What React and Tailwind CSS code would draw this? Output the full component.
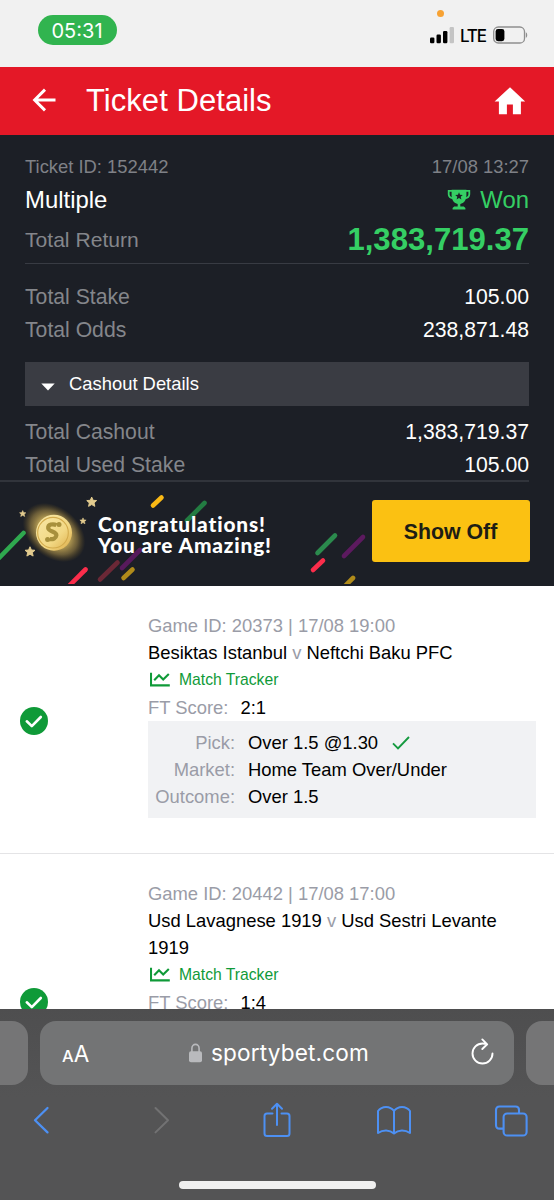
import clsx from "clsx";

const games = [
  {
    id: "20373",
    time: "17/08 19:00",
    home: "Besiktas Istanbul",
    away: "Neftchi Baku PFC",
    score: "2:1",
    pick: {
      label: "Over 1.5 @1.30",
      market: "Home Team Over/Under",
      outcome: "Over 1.5",
    },
  },
  {
    id: "20442",
    time: "17/08 17:00",
    home: "Usd Lavagnese 1919",
    away: "Usd Sestri Levante 1919",
    score: "1:4",
  },
];

const confetti = [
  { x1: 23.5, y1: 53, x2: -3, y2: 80, color: "#2fa84f" },
  { x1: 161.5, y1: 17.5, x2: 153, y2: 25.5, color: "#fab915" },
  { x1: 204.5, y1: 23, x2: 187, y2: 40.5, color: "#237c42" },
  { x1: 140, y1: 70, x2: 122, y2: 88, color: "#571a5c" },
  { x1: 117.5, y1: 82.5, x2: 100, y2: 99.5, color: "#6b2836" },
  { x1: 85.5, y1: 89.5, x2: 68, y2: 107, color: "#fb2d4b" },
  { x1: 132.5, y1: 89.5, x2: 123.5, y2: 98, color: "#b08b1a" },
  { x1: 335, y1: 55.5, x2: 317.5, y2: 73, color: "#2b8a4d" },
  { x1: 363, y1: 57, x2: 344, y2: 76, color: "#5c1a5f" },
  { x1: 323, y1: 80.5, x2: 313, y2: 90, color: "#fb2d4b" },
  { x1: 353, y1: 98, x2: 344, y2: 107, color: "#b08b1a" },
];

const stars = [
  { x: 91.7, y: 22, scale: 0.95 },
  { x: 22.7, y: 33.7, scale: 0.6 },
  { x: 83, y: 41, scale: 0.6 },
  { x: 30, y: 71.7, scale: 0.95 },
];

const StatusBar = () => (
  <div className="relative flex h-[67px] shrink-0 justify-between bg-[#f1f1f1] pl-[38px] pr-[26px] font-['Inter',sans-serif]">
    <div className="mt-[15px] flex h-[30px] w-[79px] items-center justify-center rounded-full bg-[#31b44f] pr-px pt-px text-[20px] text-white">
      05:31
    </div>
    <span className="absolute left-[436.5px] top-[10px] size-[7px] rounded-full bg-[#f7a233]" />
    <div className="mt-[26px] flex h-[18px] items-center">
      <svg width="25" height="18" viewBox="0 0 25 18">
        <rect x="0" y="11.5" width="4.4" height="5.7" rx="1.2" fill="#000" />
        <rect x="6.5" y="8.6" width="4.4" height="8.6" rx="1.2" fill="#000" />
        <rect x="13" y="5" width="4.4" height="12.2" rx="1.2" fill="#000" />
        <rect x="19.6" y="1" width="4.4" height="16.2" rx="1.2" fill="#c4c4c4" />
      </svg>
      <span className="ml-[5px] w-[28px] whitespace-nowrap pt-px text-[17px] font-medium leading-[18px] tracking-[-1.2px] text-black">
        LTE
      </span>
      <svg className="ml-[5px]" width="35" height="18" viewBox="0 0 35 18">
        <rect x="0.7" y="1" width="30.8" height="16" rx="4.6" fill="none" stroke="#8e8e8e" strokeWidth="1.3" />
        <rect x="2.6" y="3" width="8.8" height="12.2" rx="2.4" fill="#000" />
        <path d="M32.8 6.2c1.9.8 1.9 4.8 0 5.6z" fill="#8e8e8e" />
      </svg>
    </div>
  </div>
);

const TitleBar = () => (
  <header className="flex h-[68px] shrink-0 items-center bg-[#e41827] pl-8 pr-7 text-white">
    <svg className="-mt-[2px]" width="24" height="24" viewBox="0 0 24 24" fill="none" stroke="currentColor" strokeWidth="2.9">
      <path d="M13 1.6 2.6 12 13 22.4M2.8 12H23.5" />
    </svg>
    <h1 className="ml-[30px] flex-1 text-[31px] leading-[68px] tracking-[0.05px]">Ticket Details</h1>
    <svg width="32" height="28" viewBox="0 0 32 28" fill="currentColor">
      <path d="M16 .3.6 14.6h4.3v12.7h8V17.4h6v9.9h8V14.6h4.3z" />
    </svg>
  </header>
);

const TrophyIcon = () => (
  <svg width="24" height="21" viewBox="0 0 24 21">
    <path
      d="M5.6 1.8H1.700v3.400c0 2.400 2 3.900 5 4.200M18.400 1.800h3.900v3.400c0 2.400-2 3.900-5 4.200"
      fill="none"
      stroke="#35cf64"
      strokeWidth="1.8"
    />
    <path
      d="M4.600.7h14.800v5.600c0 5-2.600 8-6.100 8.600v2.700h3.500l1.600 1.300v1.500H5.600v-1.500l1.600-1.300h3.500v-2.700C7.200 14.300 4.600 11.300 4.600 6.300z"
      fill="#35cf64"
    />
    <path d="m12 3.200 1 2.600 2.800.2-2.100 1.800.7 2.700-2.400-1.500-2.400 1.500.7-2.700L8.200 6l2.800-.2z" fill="#1c1f26" />
  </svg>
);

const Row = ({ label, value, className }) => (
  <div className={clsx("flex items-center justify-between text-[21.2px]", className)}>
    <span className="text-[#84868b]">{label}</span>
    <span className="text-white">{value}</span>
  </div>
);

const Summary = () => (
  <section className="h-[345px] shrink-0 bg-[#1c1f26] px-[25px] pt-4">
    <div className="flex h-8 items-center justify-between text-[18.4px] text-[#7f8187]">
      <span>Ticket ID: 152442</span>
      <span>17/08 13:27</span>
    </div>
    <div className="flex h-[33px] items-center justify-between text-[23.9px]">
      <span className="text-white">Multiple</span>
      <span className="flex items-center gap-[9px] text-[#35cf64]">
        <TrophyIcon />
        Won
      </span>
    </div>
    <div className="flex h-[48px] items-center justify-between border-b border-[#383b43]">
      <span className="text-[21.1px] text-[#84868b]">Total Return</span>
      <span className="pt-[2px] text-[31.1px] font-bold text-[#35cf64]">1,383,719.37</span>
    </div>
    <div className="pt-4">
      <Row label="Total Stake" value="105.00" className="h-[33px]" />
      <Row label="Total Odds" value="238,871.48" className="h-[33px]" />
    </div>
    <button className="mt-4 flex h-[44px] w-full items-center bg-[#3a3c43] pl-4 text-left text-[18.4px] text-white">
      <svg className="mt-[6px]" width="14" height="8" viewBox="0 0 14 8">
        <path d="M.3.5h13.4L7 7.6z" fill="#fff" />
      </svg>
      <span className="ml-[14px]">Cashout Details</span>
    </button>
    <div className="pt-[10px]">
      <Row label="Total Cashout" value="1,383,719.37" className="h-8" />
      <Row label="Total Used Stake" value="105.00" className="h-[33px]" />
    </div>
  </section>
);

const BannerArt = () => (
  <svg className="absolute left-0 top-0" width="372" height="104" viewBox="0 0 372 104">
    <defs>
      <radialGradient id="glow">
        <stop offset="0.4" stopColor="#e6c766" stopOpacity="0.95" />
        <stop offset="0.75" stopColor="#b8994a" stopOpacity="0.5" />
        <stop offset="1" stopColor="#8a6a1e" stopOpacity="0" />
      </radialGradient>
      <linearGradient id="coin" x1="0" y1="0" x2="1" y2="1">
        <stop offset="0" stopColor="#f9e8a8" />
        <stop offset="0.6" stopColor="#f2d884" />
        <stop offset="1" stopColor="#dcab45" />
      </linearGradient>
    </defs>
    {confetti.map((c) => (
      <line
        key={`${c.x1}-${c.y1}`}
        x1={c.x1}
        y1={c.y1}
        x2={c.x2}
        y2={c.y2}
        stroke={c.color}
        strokeWidth="4.6"
        strokeLinecap="round"
      />
    ))}
    <ellipse cx="54" cy="52.5" rx="35" ry="25" fill="url(#glow)" transform="rotate(40 54 52.5)" />
    <circle cx="54" cy="52.7" r="18" fill="url(#coin)" />
    <circle cx="53" cy="52.7" r="15.3" fill="none" stroke="#d3ab4c" strokeWidth="1.1" />
    <path
      d="M56.5 45.2c-3.500-1.800-8.600-.8-8.300 2.900.3 3.700 8.600 3.200 8.200 7.200-.3 3-3.600 4.300-6.600 3.800"
      fill="none"
      stroke="#a8903c"
      strokeWidth="4.2"
    />
    <circle cx="47.6" cy="59.4" r="2.5" fill="#a8903c" />
    <circle cx="59" cy="44.6" r="2.5" fill="#a8903c" />
    {stars.map((s) => (
      <path
        key={s.x}
        d="M0-5.2 1.500-1.800 5.200-1.500 2.500 1 3.300 4.600 0 2.700-3.300 4.600-2.500 1-5.200-1.500-1.500-1.800z"
        fill="#e3cb8e"
        stroke="#e3cb8e"
        strokeLinejoin="round"
        transform={`translate(${s.x} ${s.y}) scale(${s.scale})`}
      />
    ))}
  </svg>
);

const Banner = () => (
  <section className="relative flex h-[106px] shrink-0 items-start justify-between bg-[#1c1f26] pr-[24px]">
    <BannerArt />
    <div className="absolute left-0 top-0 h-[2px] w-[529px] bg-[#31343b]" />
    <p className="relative ml-[98px] mt-[33px] whitespace-nowrap font-['Lato',sans-serif] text-[20.8px] font-black leading-[21px] tracking-[0.85px] text-white">
      Congratulations!
      <br />
      You are Amazing!
    </p>
    <button className="mt-5 h-[62px] w-[158px] rounded-[3px] bg-[#fbc112] pr-px pt-[3px] text-[21.3px] font-bold text-[#1d1d14]">
      Show Off
    </button>
  </section>
);

const PickLine = ({ label, children }) => (
  <div className="flex h-[27px] items-center">
    <span className="w-[87px] text-right text-[#9a9ca7]">{label}:</span>
    <span className="ml-[13px] flex items-center text-black">{children}</span>
  </div>
);

const Game = ({ game }) => (
  <article className="flex border-b border-[#e4e4e6] pb-[35px] pt-[26px]">
    <svg className="ml-5 mt-[11px] shrink-0 self-center" width="28" height="28" viewBox="0 0 28 28">
      <circle cx="14" cy="14" r="14" fill="#0f9a38" />
      <path
        d="m6.8 14.300 5 4.800L20.800 10"
        fill="none"
        stroke="#fff"
        strokeWidth="2.6"
        strokeLinecap="round"
        strokeLinejoin="round"
      />
    </svg>
    <div className="ml-[100px] w-[388px] text-[18.4px] leading-[27px]">
      <div className="text-[#9a9ca7]">
        Game ID: {game.id} | {game.time}
      </div>
      <div className="pr-4 text-black">
        {game.home} <span className="text-[#9a9ca7]">v</span> {game.away}
      </div>
      <div className="flex h-[27px] items-center text-[15.7px] text-[#0f9a38]">
        <svg className="ml-[2px] mr-[9px]" width="20" height="15" viewBox="0 0 20 15" fill="none" stroke="currentColor" strokeWidth="2.1">
          <path d="M1 .8V13.4H19.8M4.2 8.300 9 3.300 13.200 7.500 18.800 2" />
        </svg>
        Match Tracker
      </div>
      <div className="flex h-[28px] items-center pt-px">
        <span className="text-[#9a9ca7]">FT Score:</span>
        <span className="ml-[12px] text-black">{game.score}</span>
      </div>
      {game.pick ? (
        <div className="h-[97px] bg-[#f1f2f4] pt-2">
          <PickLine label="Pick">
            {game.pick.label}
            <svg className="ml-[14px]" width="18" height="14" viewBox="0 0 18 14">
              <path d="m1 7.400 5 5L17 1" fill="none" stroke="#159a3f" strokeWidth="1.9" />
            </svg>
          </PickLine>
          <PickLine label="Market">{game.pick.market}</PickLine>
          <PickLine label="Outcome">{game.pick.outcome}</PickLine>
        </div>
      ) : (
        <div className="h-[97px] bg-[#f1f2f4]" />
      )}
    </div>
  </article>
);

const BrowserBar = () => (
  <footer className="flex h-[191px] shrink-0 flex-col bg-[#545455] font-['Inter',sans-serif]">
    <div className="flex h-[88px] gap-3 bg-gradient-to-b from-[#4e4e4f] to-[#545455] pt-[11.5px]">
      <div className="h-[64.5px] w-[28px] rounded-r-[16px] bg-[#757576]" />
      <div className="flex h-[64.5px] w-[474px] items-center rounded-[16px] bg-[#737475] pl-[22px] pr-[20px] text-white">
        <span className="flex w-[127px] items-baseline pt-[2px]">
          <span className="text-[16.5px] font-medium leading-none">A</span>
          <span className="text-[22.5px] leading-none">A</span>
        </span>
        <svg width="13" height="20" viewBox="0 0 13 20">
          <path d="M2.9 9V5.4a3.6 4 0 0 1 7.200 0V9" fill="none" stroke="#b9babd" strokeWidth="1.6" />
          <rect x="0" y="8.3" width="13" height="11" rx="2" fill="#b9babd" />
        </svg>
        <span className="ml-[9px] flex-1 text-[22.6px] tracking-[0.15px]">sportybet.com</span>
        <svg
          className="-mt-[3px]"
          width="23"
          height="27"
          viewBox="0 0 23 27"
          fill="none"
          stroke="currentColor"
          strokeWidth="1.9"
          strokeLinecap="round"
          strokeLinejoin="round"
        >
          <path d="M21.5 15.500A10 10 0 1 1 11.500 5.500q2.200 0 4.300.6M11.300 1.400 16.200 6.300 11.300 11" />
        </svg>
      </div>
      <div className="h-[64.5px] w-[28px] shrink-0 rounded-l-[16px] bg-[#757576]" />
    </div>
    <nav className="-mt-[2px] flex h-[50px] items-center justify-between pl-[24px] pr-[26px] text-[#4d90f3]">
      <svg width="34" height="36" viewBox="0 0 34 36" fill="none" stroke="currentColor" strokeWidth="2.3" strokeLinecap="round" strokeLinejoin="round">
        <path d="M23.5 6 11 18.200 23.500 30.400" />
      </svg>
      <svg className="text-[#727273]" width="34" height="36" viewBox="0 0 34 36" fill="none" stroke="currentColor" strokeWidth="2" strokeLinecap="round" strokeLinejoin="round">
        <path d="M13.5 6 26 18.200 13.500 30.400" />
      </svg>
      <svg width="34" height="36" viewBox="0 0 34 36" fill="none" stroke="currentColor" strokeWidth="2" strokeLinecap="round" strokeLinejoin="round">
        <path d="M13.5 11.500H8Q5.500 11.500 5.500 14V31.500Q5.500 34 8 34H28Q30.500 34 30.500 31.500V14Q30.500 11.500 28 11.500H22.500M18 23V2M13 6.800 18 1.800 23 6.800" />
      </svg>
      <svg width="34" height="36" viewBox="0 0 34 36" fill="none" stroke="currentColor" strokeWidth="2" strokeLinecap="round" strokeLinejoin="round">
        <path d="M17 9C13 3.500 5 3.500 1 9V31C6 27.500 12.500 27.500 17 31.500C21.500 27.500 28 27.500 33 31V9C29 3.500 21 3.500 17 9zM17 9V31" />
      </svg>
      <svg width="34" height="36" viewBox="0 0 34 36" fill="none" stroke="currentColor" strokeWidth="2.1">
        <rect x="9.6" y="11.5" width="23" height="22" rx="3.6" />
        <path d="M9.6 26.600H5.500Q2 26.600 2 23V8Q2 4.500 5.500 4.500H21.500Q25 4.500 25 8V11.500" />
      </svg>
    </nav>
    <div className="ml-[179px] mt-[36px] h-[8px] w-[197px] rounded-full bg-[#efefef]" />
  </footer>
);

const App = () => {
  return (
    <div className="flex h-[1200px] w-[554px] flex-col overflow-hidden bg-white font-['Liberation_Sans',Arial,sans-serif]">
      <StatusBar />
      <TitleBar />
      <Summary />
      <Banner />
      <main className="min-h-0 flex-1 overflow-hidden">
        {games.map((game) => (
          <Game key={game.id} game={game} />
        ))}
      </main>
      <BrowserBar />
    </div>
  );
};

export default App;
